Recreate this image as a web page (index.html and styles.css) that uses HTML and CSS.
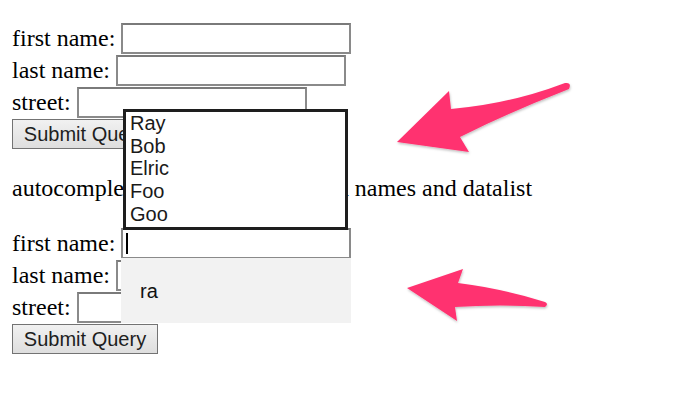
FILE: index.html
```html
<!DOCTYPE html>
<html>
<head>
<meta charset="utf-8">
<link rel="stylesheet" href="styles.css">
</head>
<body>
<div class="page">
  <form class="form">
    <div class="row">first name: <input class="field" type="text"></div>
    <div class="row">last name: <input class="field" type="text"></div>
    <div class="row">street: <input class="field" type="text"></div>
    <div class="row"><button class="btn" type="button">Submit Query</button></div>
  </form>
  <div class="note">autocomplete off, with randomized names and datalist</div>
  <form class="form form2">
    <div class="row">first name: <span class="wrap"><input class="field" type="text"><span class="caret"></span></span></div>
    <div class="row">last name: <input class="field" type="text"></div>
    <div class="row">street: <input class="field" type="text"></div>
    <div class="row"><button class="btn" type="button">Submit Query</button></div>
  </form>

  <ul class="datalist">
    <li>Ray</li>
    <li>Bob</li>
    <li>Elric</li>
    <li>Foo</li>
    <li>Goo</li>
  </ul>
  <div class="suggest">ra</div>

  <svg class="arrows" width="680" height="408" viewBox="0 0 680 408">
    <defs>
      <filter id="sh" x="-10%" y="-10%" width="120%" height="130%">
        <feDropShadow dx="0.5" dy="1.5" stdDeviation="1.2" flood-color="#000" flood-opacity="0.25"/>
      </filter>
    </defs>
    <path filter="url(#sh)" fill="#ff3270" d="M397,142 L449,91 L451,109 Q510,104 565,83 Q572,82 569,89 Q510,112 460,137 L469,152 Z"/>
    <path filter="url(#sh)" fill="#ff3270" d="M407,288 L463,269 L458,283 Q500,288 545,302 Q549,304 545,307 Q500,304 455,307 L457,321 Z"/>
  </svg>
</div>
</body>
</html>
```

FILE: styles.css
```css
html, body {
  margin: 0;
  padding: 0;
  background: #fff;
}
.page {
  position: relative;
  width: 680px;
  height: 408px;
  overflow: hidden;
  padding: 23px 0 0 12px;
  box-sizing: border-box;
  font-family: "Liberation Serif", "Times New Roman", serif;
  font-size: 24px;
  color: #000;
}
.form {
  margin: 0;
}
.row {
  height: 32px;
  line-height: 31px;
  white-space: nowrap;
}
.field {
  box-sizing: border-box;
  width: 230px;
  height: 31px;
  vertical-align: top;
  border: 2px solid #8a8a8a;
  border-top-color: #7a7a7a;
  background: #fff;
  margin: 0;
  padding: 1px 3px;
  font-family: "Liberation Sans", Arial, sans-serif;
  font-size: 20px;
  outline: none;
}
.btn {
  box-sizing: border-box;
  height: 30px;
  width: 146px;
  margin: 0;
  vertical-align: top;
  padding: 0;
  border: 1.5px solid #737373;
  background: linear-gradient(#f1f1f1, #dedede);
  font-family: "Liberation Sans", Arial, sans-serif;
  font-size: 20px;
  color: #1e1e1e;
  line-height: 26px;
}
.note {
  margin-top: 22px;
  height: 32px;
  line-height: 31px;
  white-space: nowrap;
}
.form2 {
  margin-top: 23px;
}
.wrap {
  position: relative;
  display: inline-block;
  vertical-align: top;
  height: 31px;
}
.caret {
  position: absolute;
  left: 5px;
  top: 5px;
  width: 2px;
  height: 21px;
  background: #000;
}
.datalist {
  position: absolute;
  left: 123px;
  top: 109px;
  width: 225px;
  height: 121px;
  box-sizing: border-box;
  margin: 0;
  padding: 0 0 0 4px;
  list-style: none;
  background: #fff;
  border: 3px solid #1e1e1e;
  font-family: "Liberation Sans", Arial, sans-serif;
  font-size: 20px;
  line-height: 22.7px;
  color: #1a1a1a;
}
.suggest {
  position: absolute;
  left: 121px;
  top: 258px;
  width: 230px;
  height: 65px;
  box-sizing: border-box;
  background: #f2f2f2;
  padding: 21px 0 0 19px;
  font-family: "Liberation Sans", Arial, sans-serif;
  font-size: 20px;
  line-height: 24px;
  color: #111;
}
.arrows {
  position: absolute;
  left: 0;
  top: 0;
}
```
